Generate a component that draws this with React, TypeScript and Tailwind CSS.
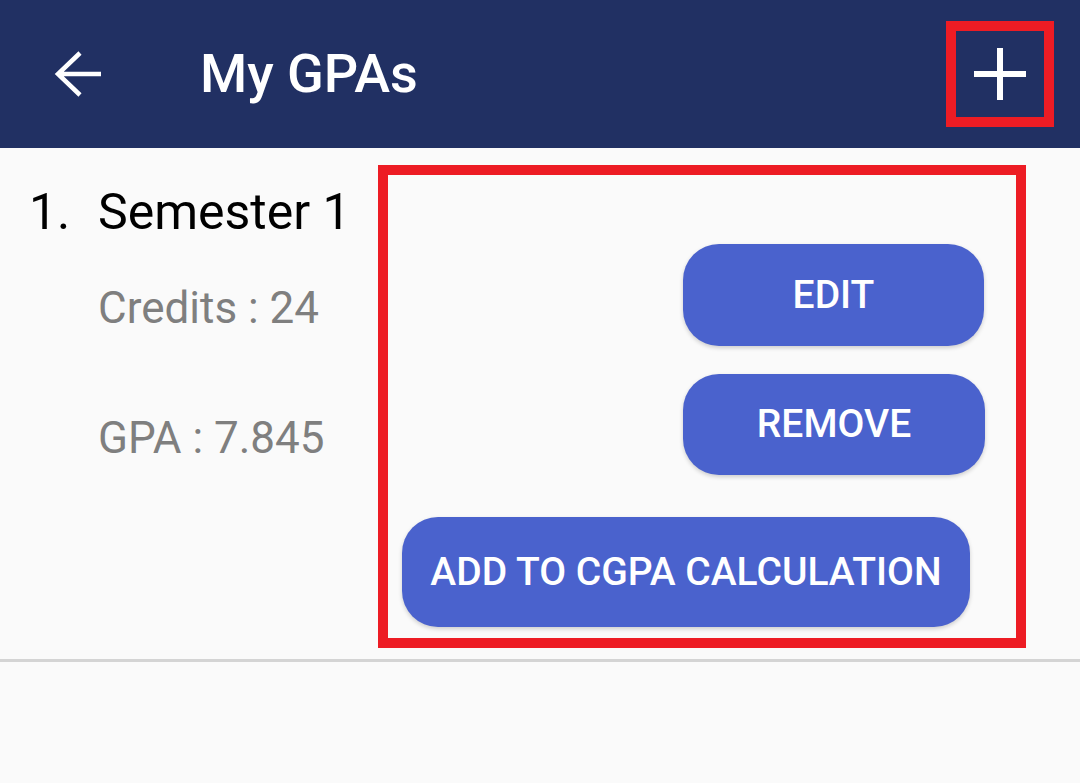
import React from 'react';

const font = { fontFamily: 'Roboto, "Noto Sans", sans-serif' };

function BackArrow() {
  return (
    <svg width="50" height="50" viewBox="0 0 50 50" className="shrink-0">
      <path d="M4 25H47M26 4L4 25L26 46" fill="none" stroke="white" strokeWidth="4.5" strokeLinecap="butt" strokeLinejoin="miter" />
    </svg>
  );
}

function PlusIcon() {
  return (
    <svg width="52" height="52" viewBox="0 0 52 52">
      <path d="M0 26H52M26 0V52" fill="none" stroke="white" strokeWidth="6" />
    </svg>
  );
}

function PillButton({ label, className }: { label: string; className?: string }) {
  return (
    <button
      className={
        'flex items-center justify-center rounded-[36px] bg-[#4a62cd] text-[39px] font-medium leading-none text-white shadow-[0_2px_4px_rgba(0,0,0,0.18)] ' +
        (className ?? '')
      }
    >
      {label}
    </button>
  );
}

export default function App() {
  return (
    <div style={font} className="flex h-[783px] w-[1080px] flex-col bg-[#fafafa]">
      <header className="flex h-[148px] shrink-0 items-center bg-[#213063] pl-[54px] pr-[26px]">
        <BackArrow />
        <h1 className="ml-[96px] text-[54px] font-medium leading-none text-white">My GPAs</h1>
        <div className="ml-auto flex h-[106px] w-[108px] items-center justify-center border-[10px] border-[#ed1c24]">
          <PlusIcon />
        </div>
      </header>

      <div className="flex">
        <div className="w-[378px] shrink-0 pl-[29px] pt-[39px]">
          <div className="flex text-[50px] leading-none text-black">
            <span className="w-[69px]">1.</span>
            <span>Semester 1</span>
          </div>
          <div className="mt-[49px] pl-[69px] text-[44px] leading-none text-[#7f7f7f]">Credits : 24</div>
          <div className="mt-[86px] pl-[69px] text-[44px] leading-none text-[#7f7f7f]">GPA : 7.845</div>
        </div>

        <div className="mt-[17px] flex w-[648px] flex-col border-[10px] border-[#ed1c24] pb-[11px]">
          <PillButton label="EDIT" className="ml-auto mr-[32px] mt-[69px] h-[102px] w-[301px]" />
          <PillButton label="REMOVE" className="ml-auto mr-[31px] mt-[28px] h-[101px] w-[302px]" />
          <PillButton label="ADD TO CGPA CALCULATION" className="ml-[14px] mt-[42px] h-[110px] w-[568px]" />
        </div>
      </div>

      <div className="mt-[11px] h-[3px] bg-[#d4d4d4]" />
    </div>
  );
}
